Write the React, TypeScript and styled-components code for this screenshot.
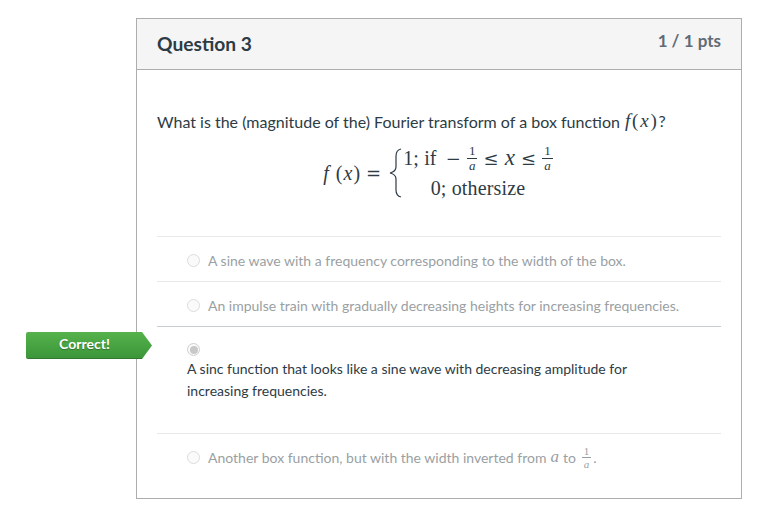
import styled, { createGlobalStyle } from 'styled-components';

const GlobalStyle = createGlobalStyle`
  html, body {
    margin: 0;
    padding: 0;
    background: #fff;
    font-family: Lato, "Liberation Sans", sans-serif;
  }
`;

const Page = styled.div`
  width: 764px;
  height: 510px;
  box-sizing: border-box;
  padding: 18px 22px 0 136px;
  overflow: hidden;
`;

const Card = styled.section`
  position: relative;
  height: 481px;
  box-sizing: border-box;
  border: 1px solid #adadad;
`;

const Header = styled.header`
  display: flex;
  justify-content: space-between;
  height: 51px;
  box-sizing: border-box;
  padding: 0 20px;
  background: #f5f5f5;
  border-bottom: 1px solid #adadad;
`;

const Title = styled.h2`
  margin: 0;
  font-size: 19.2px;
  font-weight: 700;
  line-height: 50px;
  color: #2d3b45;
`;

const Points = styled.div`
  font-size: 17px;
  font-weight: 700;
  line-height: 44px;
  color: #5f6b75;
`;

const Body = styled.div`
  padding: 40px 20px 0;
`;

const Prompt = styled.p`
  display: flex;
  align-items: center;
  gap: 5px;
  margin: 0;
  height: 22px;
  font-size: 16px;
  color: #2d3b45;
`;

const InlineMath = styled.span`
  font-family: "Liberation Serif", serif;
  font-size: 19px;
  letter-spacing: 1.8px;
`;

const Question = styled.span`
  font-family: Lato, sans-serif;
  font-size: 16px;
`;

const Formula = styled.div`
  display: flex;
  justify-content: center;
  align-items: center;
  gap: 6px;
  height: 62px;
  margin-top: 10px;
  padding-right: 2px;
  font-family: "Liberation Serif", serif;
  font-size: 20px;
  color: #2d3b45;
`;

const Lhs = styled.span`
  display: flex;
  align-items: center;
  gap: 5px;
  letter-spacing: 1px;
`;

const CaseList = styled.div`
  display: flex;
  flex-direction: column;
  align-items: center;
  margin-left: -5px;
`;

const CaseLine = styled.div`
  display: flex;
  align-items: center;
  gap: 6px;
  height: 30px;
  white-space: pre;
  letter-spacing: 0.15px;
`;

const CaseLabel = styled.span`
  margin-right: 3px;
`;

const Var = styled.i`
  font-family: "Liberation Serif", serif;
`;

const CaseVar = styled(Var)`
  font-size: 23px;
`;

const BigVar = styled(Var)`
  font-size: 17px;
`;

const Relation = styled.span`
  font-family: "DejaVu Serif", serif;
  font-size: 18px;
`;

const Fraction = styled.span<{ $size: number }>`
  display: inline-flex;
  flex-direction: column;
  align-items: center;
  font-family: "Liberation Serif", serif;
  font-size: ${({ $size }) => $size}px;
  line-height: ${({ $size }) => $size + 1}px;
  letter-spacing: 0;
`;

const Numerator = styled.span`
  padding: 0 2px;
  border-bottom: 1px solid currentColor;
`;

const Options = styled.div`
  margin-top: 32px;
`;

const Option = styled.div`
  display: flex;
  align-items: center;
  gap: 8px;
  height: 42px;
  padding: 2px 0 0 30px;
  border-top: 1px solid #e9e9e9;
  font-size: 14px;
  color: #9a9fa3;
`;

const LastOption = styled(Option)`
  height: 46px;
  padding: 0 0 2px 30px;
`;

const OptionText = styled.span`
  display: flex;
  align-items: center;
  gap: 4px;
  white-space: pre;
`;

const FractionWithDot = styled.span`
  display: flex;
  align-items: center;
  gap: 2px;
  margin-left: 2px;
`;

const ChosenOption = styled.div`
  height: 107px;
  box-sizing: border-box;
  padding: 16px 80px 0 30px;
  border-top: 1px solid #c7cdd1;
  font-size: 14px;
  line-height: 22px;
  color: #2d3b45;
`;

const Radio = styled.span<{ $checked?: boolean }>`
  position: relative;
  display: block;
  flex: none;
  width: 13px;
  height: 13px;
  box-sizing: border-box;
  margin-bottom: ${({ $checked }) => ($checked ? '2px' : '0')};
  border: 1px solid ${({ $checked }) => ($checked ? '#cfcfcf' : '#dcdcdc')};
  border-radius: 50%;
  background: #fafafa;

  &::after {
    content: '';
    display: ${({ $checked }) => ($checked ? 'block' : 'none')};
    position: absolute;
    inset: 1.5px;
    border-radius: 50%;
    background: #c8c8c8;
  }
`;

const Flag = styled.div`
  position: absolute;
  left: -111px;
  top: 313px;
  width: 126px;
  height: 27px;
  box-sizing: border-box;
  padding: 0 9px 0 0;
  clip-path: polygon(0 0, 116px 0, 126px 50%, 116px 100%, 0 100%);
  border-radius: 2px;
  border-bottom: 1px solid #2f7a2f;
  background: linear-gradient(#55b24b, #3c963a);
  color: #fff;
  font-size: 14px;
  font-weight: 700;
  line-height: 24px;
  text-align: center;
  text-shadow: 0 1px 1px rgba(0, 0, 0, 0.3);
`;

const Brace = () => (
  <svg width="14" height="50" viewBox="0 0 14 50" fill="none" stroke="#2d3b45" strokeWidth="1.2">
    <path d="M13 1C8.5 2 8 5 8 8V19C8 22 6 24 2 25C6 26 8 28 8 31V42C8 45 8.5 48 13 49" />
  </svg>
);

const OneOverA = ({ size }: { size: number }) => (
  <Fraction $size={size}>
    <Numerator>1</Numerator>
    <Var>a</Var>
  </Fraction>
);

const App = () => (
  <>
    <GlobalStyle />
    <Page>
      <Card>
        <Flag>Correct!</Flag>
        <Header>
          <Title>Question 3</Title>
          <Points>1 / 1 pts</Points>
        </Header>
        <Body>
          <Prompt>
            What is the (magnitude of the) Fourier transform of a box function
            <InlineMath>
              <Var>f</Var>(<Var>x</Var>)<Question>?</Question>
            </InlineMath>
          </Prompt>
          <Formula>
            <Lhs>
              <span>
                <Var>f</Var> (<Var>x</Var>)
              </span>
              <Relation>=</Relation>
            </Lhs>
            <Brace />
            <CaseList>
              <CaseLine>
                <CaseLabel>1; if</CaseLabel>
                <Relation>−</Relation>
                <OneOverA size={13} />
                <Relation>≤</Relation>
                <CaseVar>x</CaseVar>
                <Relation>≤</Relation>
                <OneOverA size={13} />
              </CaseLine>
              <CaseLine>0; othersize</CaseLine>
            </CaseList>
          </Formula>
          <Options>
            <Option>
              <Radio />
              A sine wave with a frequency corresponding to the width of the box.
            </Option>
            <Option>
              <Radio />
              An impulse train with gradually decreasing heights for increasing frequencies.
            </Option>
            <ChosenOption>
              <Radio $checked />
              A sinc function that looks like a sine wave with decreasing amplitude for increasing
              frequencies.
            </ChosenOption>
            <LastOption>
              <Radio />
              <OptionText>
                Another box function, but with the width inverted from
                <BigVar>a</BigVar>
                to
                <FractionWithDot>
                  <OneOverA size={11} />.
                </FractionWithDot>
              </OptionText>
            </LastOption>
          </Options>
        </Body>
      </Card>
    </Page>
  </>
);

export default App;
